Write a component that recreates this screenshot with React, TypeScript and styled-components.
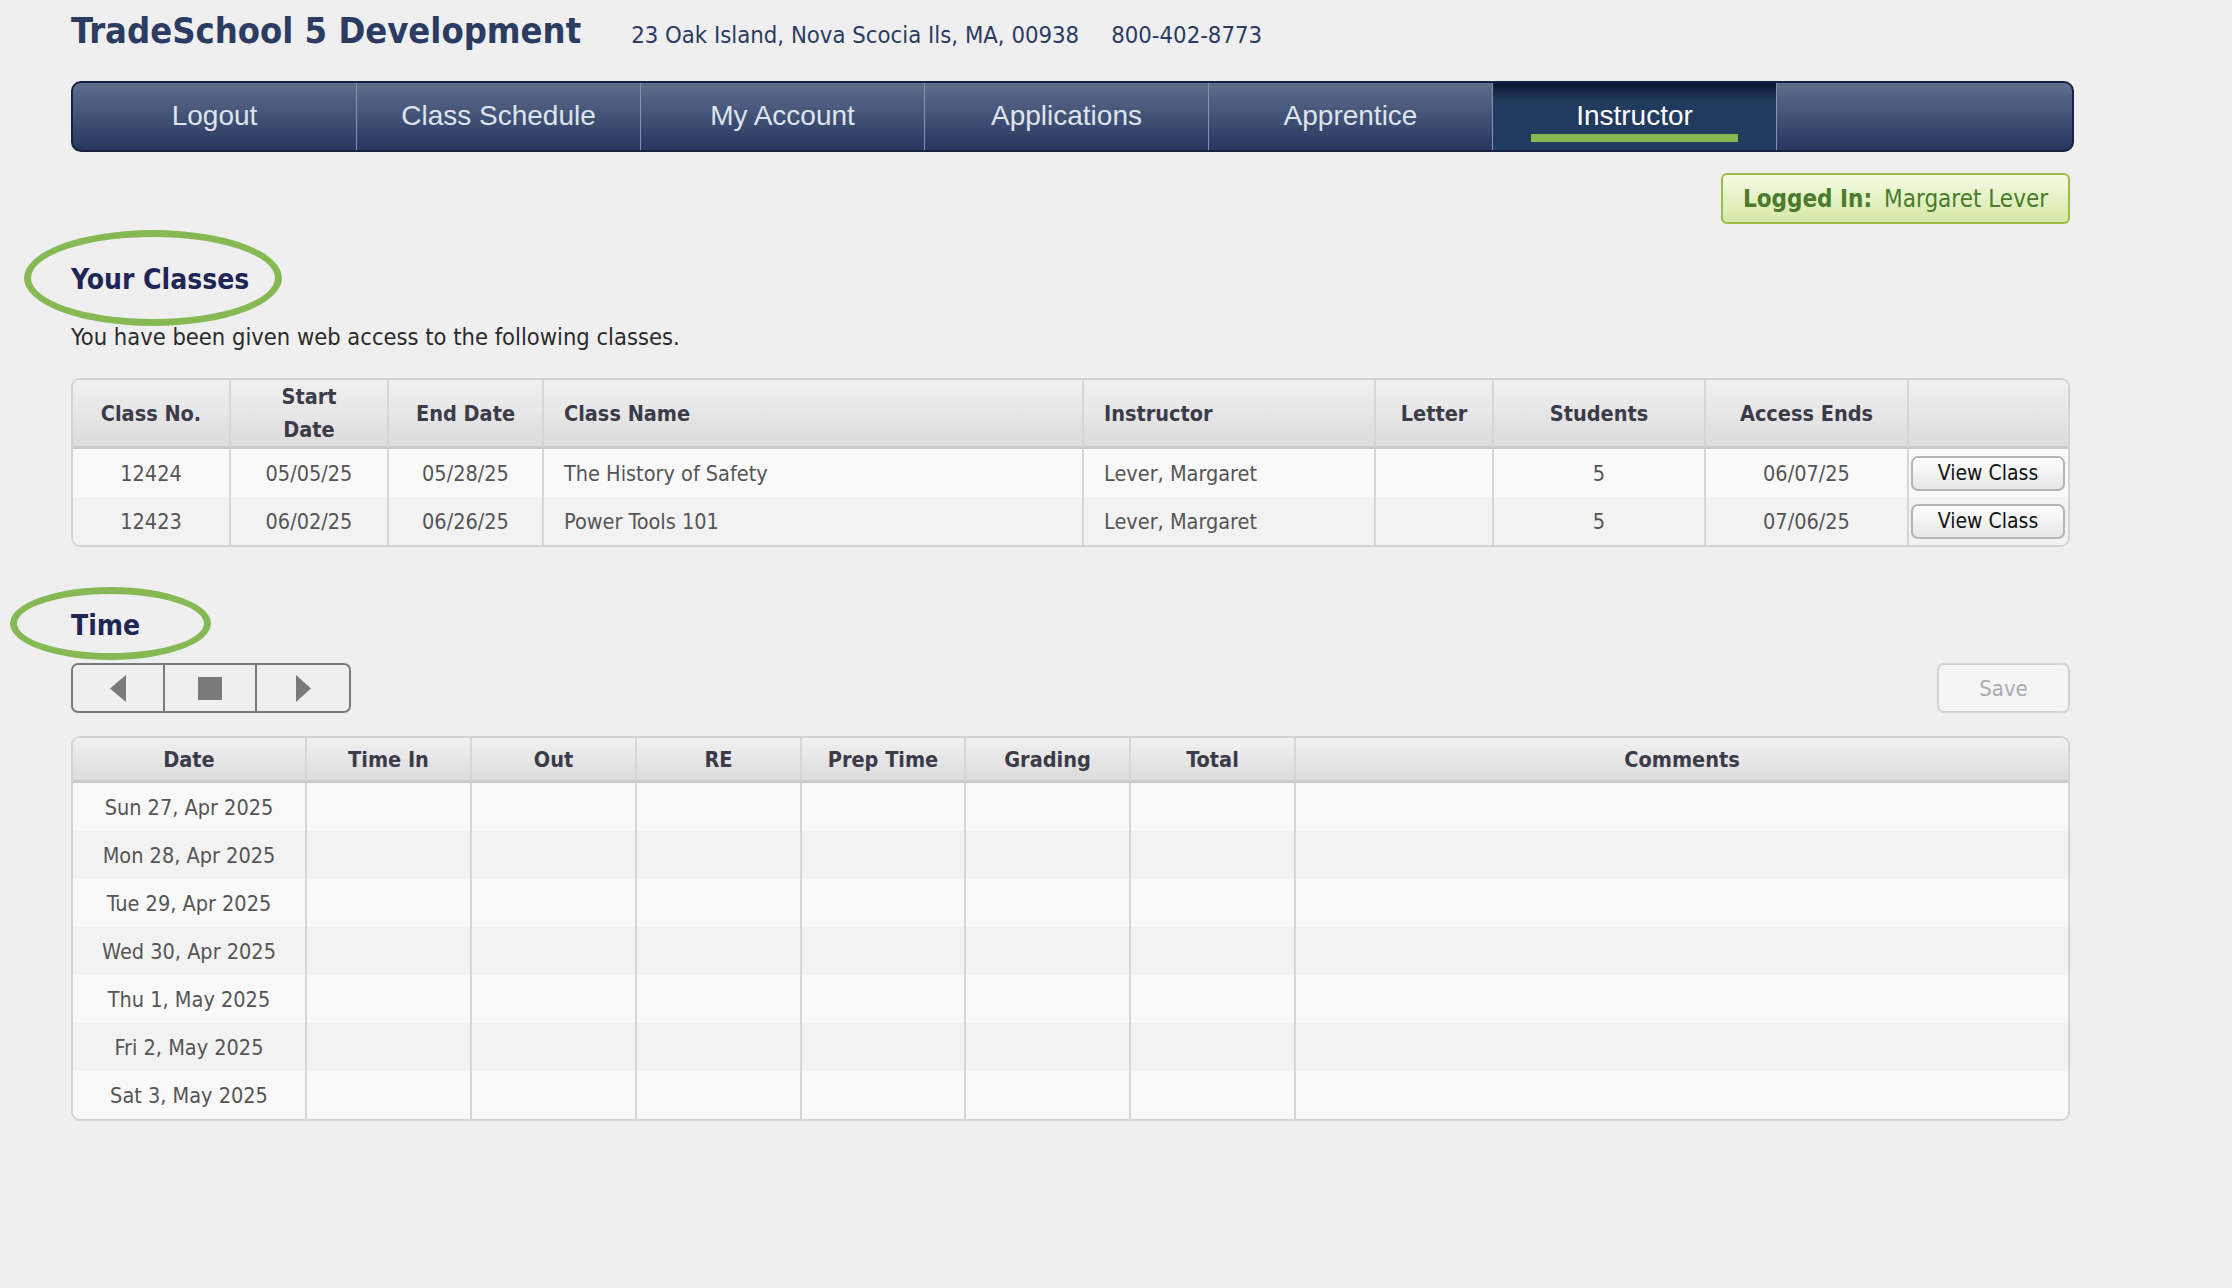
import React from 'react';
import styled, { createGlobalStyle } from 'styled-components';

const GlobalStyle = createGlobalStyle`
    html, body {
        margin: 0;
        padding: 0;
        background: #efefef;
    }
    body {
        font-family: "DejaVu Sans Condensed", "DejaVu Sans", Verdana, sans-serif;
        font-stretch: condensed;
        color: #333;
    }
`

const Page = styled.div`
    width: 2003px;
    padding: 0 0 60px 71px;
`

const Header = styled.div`
    display: flex;
    align-items: baseline;
    height: 81px;
    box-sizing: border-box;
`

const Title = styled.h1`
    margin: 0;
    font-size: 36px;
    line-height: 62px;
    font-weight: bold;
    color: #2b3b62;
    margin-right: 50px;
`

const Contact = styled.span`
    font-size: 23.7px;
    color: #2b3b62;
    margin-right: 32px;
`

const Nav = styled.nav`
    display: flex;
    height: 71px;
    box-sizing: border-box;
    border: 2px solid #16223f;
    border-radius: 10px;
    overflow: hidden;
    background: linear-gradient(#5e6e8d, #27365f);
    font-family: "Liberation Sans", Arial, sans-serif;
    font-stretch: normal;
`

const Tab = styled.div<{ $active?: boolean }>`
    width: 284px;
    flex: none;
    display: flex;
    align-items: center;
    justify-content: center;
    position: relative;
    font-size: 28px;
    color: ${p => (p.$active ? '#ffffff' : '#dfe4ee')};
    border-right: 1px solid #8894ad;
    box-sizing: border-box;
    background: ${p => (p.$active ? 'linear-gradient(#0a1533 0%, #213b5e 28%, #213b5e 100%)' : 'transparent')};
    padding-bottom: 2px;
`

const ActiveBar = styled.span`
    position: absolute;
    left: 38px;
    right: 38px;
    bottom: 8px;
    height: 8px;
    background: #88b854;
`

const Filler = styled.div`
    flex: 1;
`

const BadgeRow = styled.div`
    display: flex;
    justify-content: flex-end;
    margin-top: 21px;
    margin-right: 4px;
`

const Badge = styled.div`
    height: 51px;
    width: 349px;
    box-sizing: border-box;
    display: flex;
    align-items: center;
    justify-content: center;
    gap: 12px;
    border: 2px solid #9dbc45;
    border-radius: 6px;
    background: linear-gradient(#f6fbe4, #d4e8a6);
    color: #4a7b2c;
    font-size: 24px;
    & b {
        font-weight: bold;
    }
`

const SectionTitle = styled.h2<{ $ringLeft: number; $ringWidth: number; $ringHeight: number; $ringTop: number }>`
    position: relative;
    margin: 0;
    font-size: 28px;
    font-weight: bold;
    color: #1e2656;
    line-height: 36px;

    &::before {
        content: '';
        position: absolute;
        left: ${p => p.$ringLeft}px;
        top: ${p => p.$ringTop}px;
        width: ${p => p.$ringWidth}px;
        height: ${p => p.$ringHeight}px;
        box-sizing: border-box;
        border: 7px solid #86b953;
        border-radius: 50%;
        pointer-events: none;
    }
`

const ClassesSection = styled.section`
    margin-top: 38px;
`

const Intro = styled.p`
    margin: 24px 0 26px;
    font-size: 23.5px;
    line-height: 30px;
    color: #2a2a2a;
`

const Grid = styled.table`
    width: 1999px;
    table-layout: fixed;
    border-collapse: separate;
    border-spacing: 0;
    border: 2px solid #d3d3d3;
    border-radius: 9px;
    overflow: hidden;
    background: #f9f9f9;
    font-size: 21.5px;
`

const HeadRow = styled.tr<{ $h: number }>`
    height: ${p => p.$h}px;
`

const Th = styled.th<{ $left?: boolean }>`
    background: linear-gradient(#f1f1f1, #dcdcdc);
    color: #3b3b4a;
    font-weight: bold;
    text-align: ${p => (p.$left ? 'left' : 'center')};
    padding: 0 ${p => (p.$left ? '20px' : '6px')};
    line-height: 33px;
    border-bottom: 3px solid #c9c9c9;
    border-right: 2px solid #d6d6d6;
    &:last-child {
        border-right: none;
    }
`

const Row = styled.tr<{ $h: number }>`
    height: ${p => p.$h}px;
    &:nth-child(even) td {
        background: #f2f2f2;
    }
`

const Td = styled.td<{ $left?: boolean }>`
    background: #f9f9f9;
    color: #555;
    text-align: ${p => (p.$left ? 'left' : 'center')};
    padding: 0 ${p => (p.$left ? '20px' : '4px')};
    border-right: 2px solid #d6d6d6;
    &:last-child {
        border-right: none;
    }
`

const ActionCell = styled(Td)`
    padding: 0 3px 0 0;
`

const ViewButton = styled.button`
    width: 154px;
    height: 35px;
    font-family: inherit;
    font-stretch: condensed;
    font-size: 21px;
    color: #111;
    border: 2px solid #b4b4b4;
    border-radius: 7px;
    background: linear-gradient(#ffffff, #e6e6e6);
    padding: 0;
    display: block;
    margin-left: auto;
`

const TimeSection = styled.section`
    margin-top: 61px;
`

const Toolbar = styled.div`
    display: flex;
    justify-content: space-between;
    margin: 19px 0 23px;
`

const Pager = styled.div`
    display: flex;
    height: 50px;
    box-sizing: border-box;
    border: 2px solid #7a7a7a;
    border-radius: 7px;
    overflow: hidden;
`

const PagerButton = styled.div`
    width: 92px;
    box-sizing: border-box;
    display: flex;
    align-items: center;
    justify-content: center;
    border-right: 2px solid #7a7a7a;
    &:last-child {
        border-right: none;
    }
`

const SaveButton = styled.button`
    width: 133px;
    height: 50px;
    margin-right: 4px;
    border: 2px solid #d2d2d2;
    border-radius: 7px;
    background: #f5f5f5;
    color: #aaaab0;
    font-family: inherit;
    font-stretch: condensed;
    font-size: 22px;
`

const classes = [
    { no: '12424', start: '05/05/25', end: '05/28/25', name: 'The History of Safety', instructor: 'Lever, Margaret', letter: '', students: 5, ends: '06/07/25' },
    { no: '12423', start: '06/02/25', end: '06/26/25', name: 'Power Tools 101', instructor: 'Lever, Margaret', letter: '', students: 5, ends: '07/06/25' },
];

const days = [
    'Sun 27, Apr 2025',
    'Mon 28, Apr 2025',
    'Tue 29, Apr 2025',
    'Wed 30, Apr 2025',
    'Thu 1, May 2025',
    'Fri 2, May 2025',
    'Sat 3, May 2025',
];

const tabs = ['Logout', 'Class Schedule', 'My Account', 'Applications', 'Apprentice', 'Instructor'];

const classCols = [158, 158, 155, 540, 292, 118, 212, 203, 159];
const timeCols = [234, 165, 165, 165, 164, 165, 165, 772];

const App = () => {
    return (
        <Page>
            <GlobalStyle />
            <Header>
                <Title>TradeSchool 5 Development</Title>
                <Contact>23 Oak Island, Nova Scocia Ils, MA, 00938</Contact>
                <Contact>800-402-8773</Contact>
            </Header>

            <Nav>
                {tabs.map(t => (
                    <Tab key={t} $active={t === 'Instructor'}>
                        {t}
                        {t === 'Instructor' && <ActiveBar />}
                    </Tab>
                ))}
                <Filler />
            </Nav>

            <BadgeRow>
                <Badge>
                    <b>Logged In:</b>
                    <span>Margaret Lever</span>
                </Badge>
            </BadgeRow>

            <ClassesSection>
                <SectionTitle $ringLeft={-47} $ringTop={-32} $ringWidth={258} $ringHeight={96}>Your Classes</SectionTitle>
                <Intro>You have been given web access to the following classes.</Intro>

                <Grid>
                    <colgroup>
                        {classCols.map((w, i) => <col key={i} width={w} />)}
                    </colgroup>
                    <thead>
                        <HeadRow $h={69}>
                            <Th>Class No.</Th>
                            <Th>Start<br />Date</Th>
                            <Th>End Date</Th>
                            <Th $left>Class Name</Th>
                            <Th $left>Instructor</Th>
                            <Th>Letter</Th>
                            <Th>Students</Th>
                            <Th>Access Ends</Th>
                            <Th />
                        </HeadRow>
                    </thead>
                    <tbody>
                        {classes.map(c => (
                            <Row key={c.no} $h={48}>
                                <Td>{c.no}</Td>
                                <Td>{c.start}</Td>
                                <Td>{c.end}</Td>
                                <Td $left>{c.name}</Td>
                                <Td $left>{c.instructor}</Td>
                                <Td>{c.letter}</Td>
                                <Td>{c.students}</Td>
                                <Td>{c.ends}</Td>
                                <ActionCell><ViewButton>View Class</ViewButton></ActionCell>
                            </Row>
                        ))}
                    </tbody>
                </Grid>
            </ClassesSection>

            <TimeSection>
                <SectionTitle $ringLeft={-61} $ringTop={-21} $ringWidth={201} $ringHeight={73}>Time</SectionTitle>
                <Toolbar>
                    <Pager>
                        <PagerButton>
                            <svg width="16" height="27" viewBox="0 0 16 27"><polygon points="16,0 16,27 0,13.5" fill="#7a7a7a" /></svg>
                        </PagerButton>
                        <PagerButton>
                            <svg width="24" height="23" viewBox="0 0 24 23"><rect width="24" height="23" fill="#7a7a7a" /></svg>
                        </PagerButton>
                        <PagerButton>
                            <svg width="15" height="27" viewBox="0 0 15 27"><polygon points="0,0 15,13.5 0,27" fill="#7a7a7a" /></svg>
                        </PagerButton>
                    </Pager>
                    <SaveButton>Save</SaveButton>
                </Toolbar>

                <Grid>
                    <colgroup>
                        {timeCols.map((w, i) => <col key={i} width={w} />)}
                    </colgroup>
                    <thead>
                        <HeadRow $h={45}>
                            <Th>Date</Th>
                            <Th>Time In</Th>
                            <Th>Out</Th>
                            <Th>RE</Th>
                            <Th>Prep Time</Th>
                            <Th>Grading</Th>
                            <Th>Total</Th>
                            <Th>Comments</Th>
                        </HeadRow>
                    </thead>
                    <tbody>
                        {days.map(d => (
                            <Row key={d} $h={48}>
                                <Td>{d}</Td>
                                <Td />
                                <Td />
                                <Td />
                                <Td />
                                <Td />
                                <Td />
                                <Td />
                            </Row>
                        ))}
                    </tbody>
                </Grid>
            </TimeSection>
        </Page>
    );
};

export default App;
